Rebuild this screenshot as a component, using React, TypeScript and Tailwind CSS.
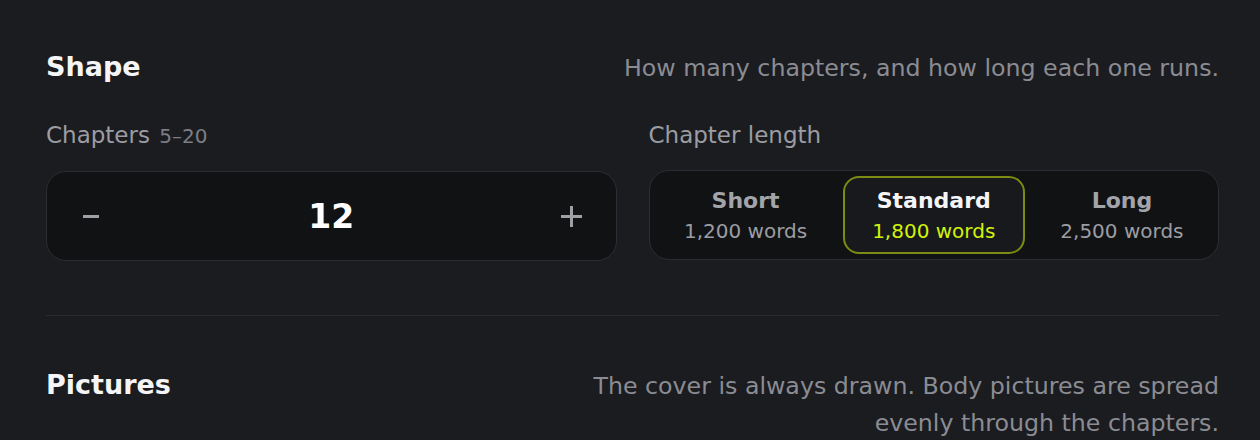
import { useState } from "react";

type Length = "short" | "standard" | "long";

const LENGTHS: { id: Length; label: string; words: string }[] = [
  { id: "short", label: "Short", words: "1,200 words" },
  { id: "standard", label: "Standard", words: "1,800 words" },
  { id: "long", label: "Long", words: "2,500 words" },
];

function SectionHeader({ title, note }: { title: string; note: string }) {
  return (
    <div className="flex items-baseline justify-between gap-8">
      <h2 className="text-[27px] leading-[32px] font-bold text-[#f5f5f7]">{title}</h2>
      <p className="max-w-[660px] text-right text-[23.7px] leading-[37px] text-[#8b8c93]">{note}</p>
    </div>
  );
}

function Stepper({ value, min, max, onChange }: { value: number; min: number; max: number; onChange: (v: number) => void }) {
  return (
    <div className="flex h-[90px] items-center justify-between rounded-[20px] border border-[#2c2d33] bg-[#111214] px-4">
      <button
        className="flex h-14 w-14 items-center justify-center text-[#9fa0a6] hover:text-white"
        onClick={() => onChange(Math.max(min, value - 1))}
        aria-label="Fewer chapters"
      >
        <svg width="16" height="3" viewBox="0 0 16 3" fill="currentColor">
          <rect width="16" height="3" />
        </svg>
      </button>
      <span className="text-[33px] leading-none font-bold text-white">{value}</span>
      <button
        className="flex h-14 w-14 items-center justify-center text-[#9fa0a6] hover:text-white"
        onClick={() => onChange(Math.min(max, value + 1))}
        aria-label="More chapters"
      >
        <svg width="21" height="21" viewBox="0 0 21 21" fill="currentColor">
          <rect x="0" y="9" width="21" height="3" />
          <rect x="9" y="0" width="3" height="21" />
        </svg>
      </button>
    </div>
  );
}

export default function App() {
  const [chapters, setChapters] = useState(12);
  const [length, setLength] = useState<Length>("standard");

  return (
    <div className="min-h-screen bg-[#1b1c20] pl-[46px] pr-[41px] pt-[50px] font-['DejaVu_Sans',sans-serif]">
      {/* Shape */}
      <section>
        <SectionHeader title="Shape" note="How many chapters, and how long each one runs." />

        <div className="mt-[34px] grid grid-cols-2 gap-8">
          <div>
            <div className="mb-[21px] text-[23px] leading-[28px] text-[#9c9da3]">
              Chapters <span className="ml-0.5 text-[20px] text-[#7d7e85]">5–20</span>
            </div>
            <Stepper value={chapters} min={5} max={20} onChange={setChapters} />
          </div>

          <div>
            <div className="mb-[21px] text-[23px] leading-[28px] text-[#9c9da3]">Chapter length</div>
            <div className="grid h-[90px] grid-cols-3 gap-[6px] rounded-[20px] border border-[#2c2d33] bg-[#111214] p-[5px]">
              {LENGTHS.map((opt) => {
                const active = opt.id === length;
                return (
                  <button
                    key={opt.id}
                    onClick={() => setLength(opt.id)}
                    className={
                      active
                        ? "flex flex-col items-center justify-center rounded-[16px] border-2 border-[#7c8b12] bg-[#18191c]"
                        : "flex flex-col items-center justify-center rounded-[16px] border-2 border-transparent"
                    }
                  >
                    <span
                      className={
                        active
                          ? "text-[22px] leading-[26px] font-bold text-[#f5f5f7]"
                          : "text-[22px] leading-[26px] font-bold text-[#a3a4aa]"
                      }
                    >
                      {opt.label}
                    </span>
                    <span
                      className={
                        active
                          ? "mt-[5px] text-[20px] leading-[24px] text-[#d2f20c]"
                          : "mt-[5px] text-[20px] leading-[24px] text-[#9c9da3]"
                      }
                    >
                      {opt.words}
                    </span>
                  </button>
                );
              })}
            </div>
          </div>
        </div>
      </section>

      <div className="mt-[54px] h-px bg-[#2b2c31]" />

      {/* Pictures */}
      <section className="mt-[52px]">
        <SectionHeader
          title="Pictures"
          note="The cover is always drawn. Body pictures are spread evenly through the chapters."
        />
      </section>
    </div>
  );
}
